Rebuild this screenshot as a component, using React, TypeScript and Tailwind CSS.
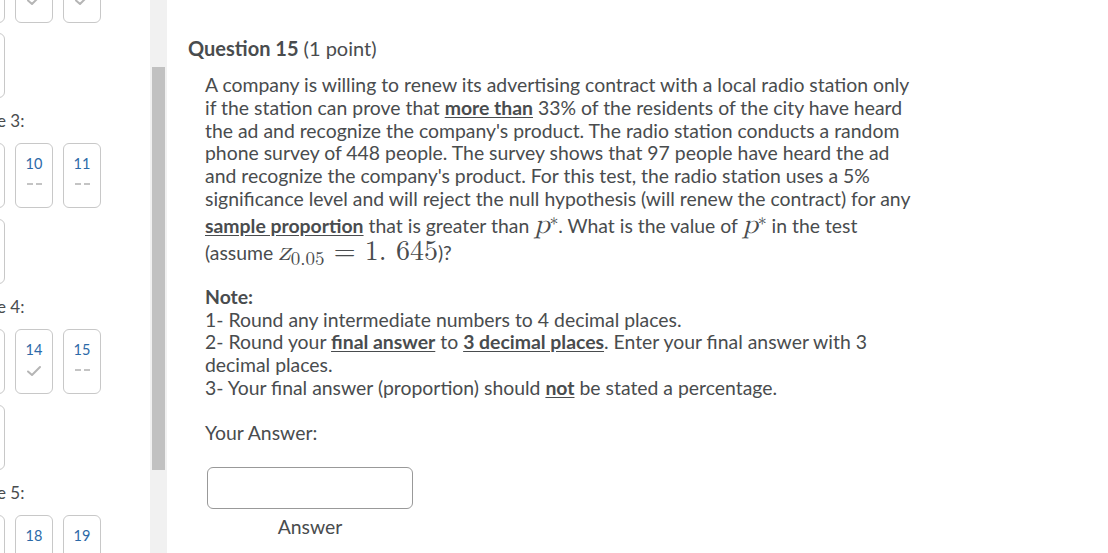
import React from "react";

const Check = () => (
  <svg width="16" height="12" viewBox="0 0 16 12" fill="none">
    <path d="M2 6.5 L6 10 L14 2" stroke="#b5b5b5" strokeWidth="2" strokeLinecap="round" strokeLinejoin="round" />
  </svg>
);

type T = { n?: string; s?: "check" | "dash" | "none" };

const Tile = ({ n, s }: T) => (
  <div className="w-[38px] h-[65px] rounded-[6px] border border-[#c8c8c8] bg-white flex flex-col items-center pt-[11px] shrink-0">
    {n && <div className="text-[14.5px] leading-[18px] text-[#2c6aa8]">{n}</div>}
    {s === "check" && <div className="mt-[6px]"><Check /></div>}
    {s === "dash" && (
      <div className="mt-[10px] flex gap-[3px]">
        <div className="w-[6px] h-[2px] bg-[#c4c4c4]" />
        <div className="w-[6px] h-[2px] bg-[#c4c4c4]" />
      </div>
    )}
  </div>
);

const Row = ({ tiles }: { tiles: T[] }) => (
  <div className="flex gap-[10px]">
    {tiles.map((t, i) => (
      <Tile key={i} {...t} />
    ))}
  </div>
);

const Label = ({ t }: { t: string }) => (
  <div className="h-[45px] flex items-center text-[17px] text-[#494c4e] ml-[30px]">{t}</div>
);

const serif = { fontFamily: "'Latin Modern Math', 'Liberation Serif', serif" };

export default function App() {
  return (
    <div className="w-[1108px] h-[553px] overflow-hidden bg-white flex" style={{ fontFamily: "Lato, 'Noto Sans', sans-serif" }}>
      <div className="w-[150px] shrink-0 overflow-hidden">
        <div className="ml-[-33px] mt-[-42px] flex flex-col">
          <Row tiles={[{ n: "6", s: "check" }, { n: "7", s: "check" }, { n: "8", s: "check" }]} />
          <div className="h-[10px]" />
          <Row tiles={[{}]} />
          <Label t="e 3:" />
          <Row tiles={[{ n: "9", s: "dash" }, { n: "10", s: "dash" }, { n: "11", s: "dash" }]} />
          <div className="h-[11px]" />
          <Row tiles={[{}]} />
          <Label t="e 4:" />
          <Row tiles={[{ n: "13", s: "check" }, { n: "14", s: "check" }, { n: "15", s: "dash" }]} />
          <div className="h-[11px]" />
          <Row tiles={[{}]} />
          <Label t="e 5:" />
          <Row tiles={[{ n: "17" }, { n: "18" }, { n: "19" }]} />
        </div>
      </div>
      <div className="w-[17px] shrink-0 bg-[#f1f1f1] flex justify-center pt-[67px]">
        <div className="w-[13px] h-[403px] bg-[#c1c1c1]" />
      </div>
      <div className="flex-1 pl-[21px] pt-[35px] text-[#494c4e]">
        <div className="text-[20px] leading-[26px]">
          <span className="font-bold">Question 15</span> (1 point)
        </div>
        <div className="pl-[17px] mt-[13px] w-[735px] text-[19.4px] leading-[22.8px]">
          <p>
            A company is willing to renew its advertising contract with a local radio station only if the station can prove that{" "}
            <span className="font-bold underline underline-offset-2">more than</span> 33% of the residents of the city have heard the ad and recognize the company's product. The radio station conducts a random phone survey of 448 people. The survey shows that 97 people have heard the ad and recognize the company's product. For this test, the radio station uses a 5% significance level and will reject the null hypothesis (will renew the contract) for any{" "}
            <span className="font-bold underline underline-offset-2">sample proportion</span> that is greater than{" "}
            <span className="text-[28px] leading-[27px] italic" style={serif}>
              p<sup className="text-[17px] not-italic relative top-[-3px]">*</sup>
            </span>
            . What is the value of{" "}
            <span className="text-[28px] leading-[27px] italic" style={serif}>
              p<sup className="text-[17px] not-italic relative top-[-3px]">*</sup>
            </span>{" "}
            in the test (assume{" "}
            <span className="text-[28px] leading-[27px]" style={serif}>
              <span className="italic">z</span>
              <sub className="text-[19px]">0.05</sub> = 1. 645
            </span>
            )?
          </p>
          <p className="mt-[21px] font-bold">Note:</p>
          <p>1- Round any intermediate numbers to 4 decimal places.</p>
          <p>
            2- Round your <span className="font-bold underline underline-offset-2">final answer</span> to{" "}
            <span className="font-bold underline underline-offset-2">3 decimal places</span>. Enter your final answer with 3 decimal places.
          </p>
          <p>
            3- Your final answer (proportion) should <span className="font-bold underline underline-offset-2">not</span> be stated a percentage.
          </p>
          <p className="mt-[22px]">Your Answer:</p>
          <div className="mt-[22px] ml-[2px] w-[206px] h-[42px] rounded-[6px] border border-[#999] bg-white" />
          <div className="w-[210px] text-center mt-[7px]">Answer</div>
        </div>
      </div>
    </div>
  );
}
